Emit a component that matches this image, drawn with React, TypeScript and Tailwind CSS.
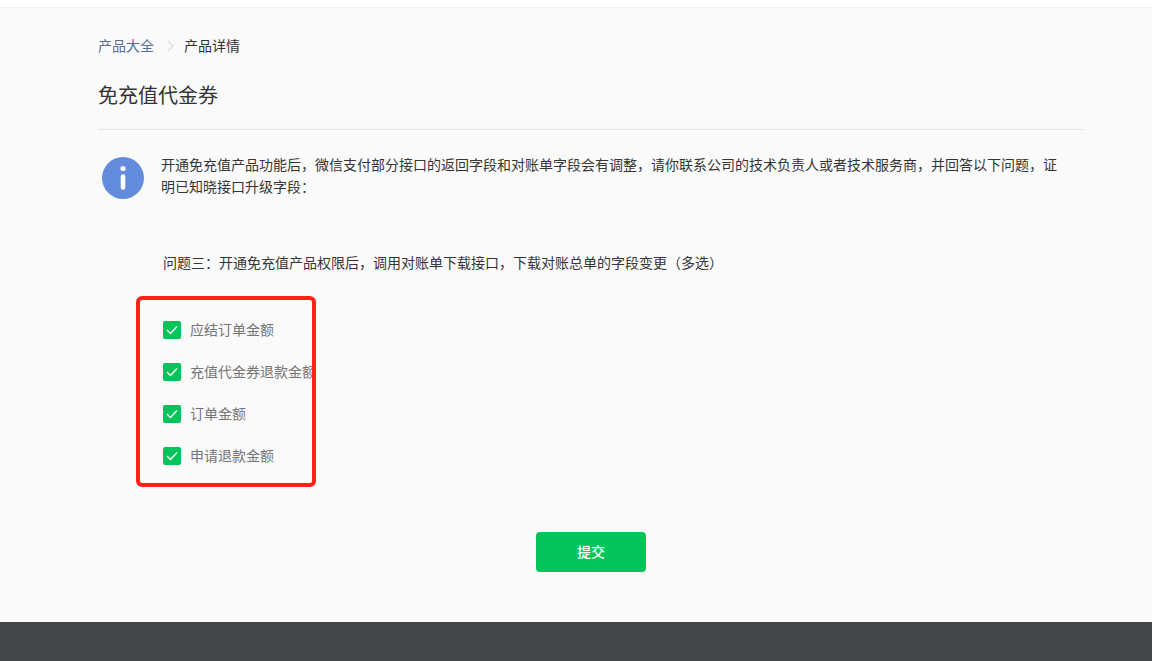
const font = { fontFamily: '"Noto Sans CJK SC", "Liberation Sans", sans-serif' };

const options = ["应结订单金额", "充值代金券退款金额", "订单金额", "申请退款金额"];

function InfoIcon() {
  return (
    <svg width="42" height="42" viewBox="0 0 42 42" className="shrink-0">
      <circle cx="21" cy="21" r="21" fill="#648cdc" />
      <circle cx="21" cy="11.5" r="2.6" fill="#fff" />
      <path d="M21 19.5v11" stroke="#fff" strokeWidth="4.6" strokeLinecap="round" />
    </svg>
  );
}

function CheckRow({ label }: { label: string }) {
  return (
    <div className="flex h-[42px] items-center">
      <span className="flex h-[18px] w-[18px] shrink-0 items-center justify-center rounded-[2px] bg-[#03c45a]">
        <svg width="12" height="10" viewBox="0 0 12 10" fill="none">
          <path d="M1 5l3.5 3.5L11 1.5" stroke="#fff" strokeWidth="1.4" />
        </svg>
      </span>
      <span className="ml-[9px] whitespace-nowrap pb-[2px] text-[14px] leading-[18px] text-[#757575]">{label}</span>
    </div>
  );
}

export default function App() {
  return (
    <div className="flex h-[661px] w-[1152px] flex-col overflow-hidden bg-[#fafafa]" style={font}>
      <div className="h-[7px] bg-white shadow-[0_1px_2px_rgba(0,0,0,0.05)]" />
      <main className="h-[615px] px-[98px]">
        <nav className="mt-[29px] flex h-[19px] items-center text-[14px] leading-[19px]">
          <a className="text-[#576b95]">产品大全</a>
          <svg width="8" height="12" viewBox="0 0 8 12" fill="none" className="ml-[13px] mr-[9px]">
            <path d="M1 1l5 5-5 5" stroke="#dcdcdc" strokeWidth="1.2" />
          </svg>
          <span className="text-[#333]">产品详情</span>
        </nav>
        <h1 className="mt-[26px] text-[20px] font-normal leading-[28px] text-[#333]">免充值代金券</h1>
        <div className="mt-[20px] w-[985px] border-t border-[#e3e3e3]" />
        <section className="mt-[27px] flex w-[985px] pl-[4px]">
          <InfoIcon />
          <p className="-mt-[4px] ml-[17px] w-[905px] text-[14px] leading-[22px] text-[#353535]">
            开通免充值产品功能后，微信支付部分接口的返回字段和对账单字段会有调整，请你联系公司的技术负责人或者技术服务商，并回答以下问题，证明已知晓接口升级字段：
          </p>
        </section>
        <p className="mt-[53px] pl-[65px] text-[14px] leading-[20px] text-[#353535]">
          问题三：开通免充值产品权限后，调用对账单下载接口，下载对账总单的字段变更（多选）
        </p>
        <div className="relative mt-[24px] w-fit pl-[65px]">
          <div className="pt-[13px]">
            {options.map((option) => (
              <CheckRow key={option} label={option} />
            ))}
          </div>
          <div className="absolute left-[38px] top-0 h-[191px] w-[180px] rounded-[6px] border-[4px] border-[#ff2018]" />
        </div>
        <div className="mt-[55px] flex justify-center pl-[30px]">
          <button className="h-[40px] w-[110px] rounded-[4px] bg-[#03c45a] pb-[2px] text-[14px] font-medium text-white">提交</button>
        </div>
      </main>
      <footer className="h-[39px] bg-[#424647]" />
    </div>
  );
}
